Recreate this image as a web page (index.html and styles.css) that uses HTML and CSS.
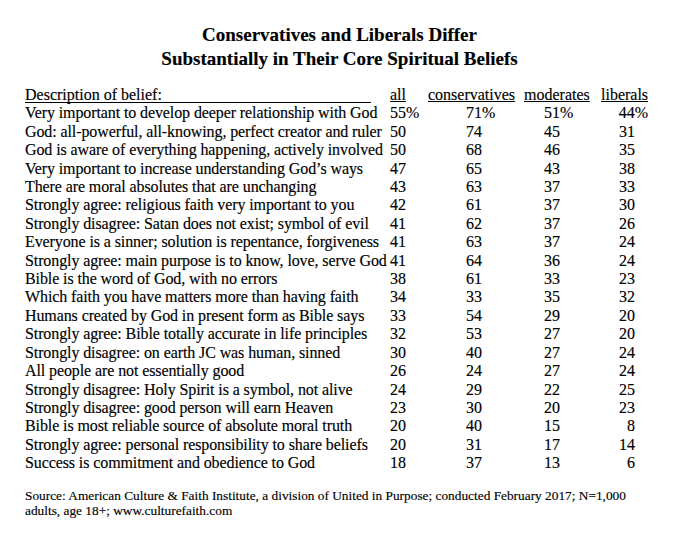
FILE: index.html
```html
<!DOCTYPE html>
<html lang="en">
<head>
<meta charset="utf-8">
<title>Conservatives and Liberals Differ</title>
<link rel="stylesheet" href="styles.css">
</head>
<body>
<main class="page">
  <h1 class="title">Conservatives and Liberals Differ<br>Substantially in Their Core Spiritual Beliefs</h1>
  <div class="table">
    <div class="row head">
      <span class="desc"><span class="desc-head">Description of belief:</span></span>
      <span class="c-all"><u>all</u></span>
      <span class="c-con"><u>conservatives</u></span>
      <span class="c-mod"><u>moderates</u></span>
      <span class="c-lib"><u>liberals</u></span>
    </div>
    <div class="row"><span class="desc">Very important to develop deeper relationship with God</span><span class="c-all">55%</span><span class="c-con">71%</span><span class="c-mod">51%</span><span class="c-lib">44<span class="pct">%</span></span></div>
    <div class="row"><span class="desc">God: all-powerful, all-knowing, perfect creator and ruler</span><span class="c-all">50</span><span class="c-con">74</span><span class="c-mod">45</span><span class="c-lib">31</span></div>
    <div class="row"><span class="desc">God is aware of everything happening, actively involved</span><span class="c-all">50</span><span class="c-con">68</span><span class="c-mod">46</span><span class="c-lib">35</span></div>
    <div class="row"><span class="desc">Very important to increase understanding God’s ways</span><span class="c-all">47</span><span class="c-con">65</span><span class="c-mod">43</span><span class="c-lib">38</span></div>
    <div class="row"><span class="desc">There are moral absolutes that are unchanging</span><span class="c-all">43</span><span class="c-con">63</span><span class="c-mod">37</span><span class="c-lib">33</span></div>
    <div class="row"><span class="desc">Strongly agree: religious faith very important to you</span><span class="c-all">42</span><span class="c-con">61</span><span class="c-mod">37</span><span class="c-lib">30</span></div>
    <div class="row"><span class="desc">Strongly disagree: Satan does not exist; symbol of evil</span><span class="c-all">41</span><span class="c-con">62</span><span class="c-mod">37</span><span class="c-lib">26</span></div>
    <div class="row"><span class="desc">Everyone is a sinner; solution is repentance, forgiveness</span><span class="c-all">41</span><span class="c-con">63</span><span class="c-mod">37</span><span class="c-lib">24</span></div>
    <div class="row"><span class="desc">Strongly agree: main purpose is to know, love, serve God</span><span class="c-all">41</span><span class="c-con">64</span><span class="c-mod">36</span><span class="c-lib">24</span></div>
    <div class="row"><span class="desc">Bible is the word of God, with no errors</span><span class="c-all">38</span><span class="c-con">61</span><span class="c-mod">33</span><span class="c-lib">23</span></div>
    <div class="row"><span class="desc">Which faith you have matters more than having faith</span><span class="c-all">34</span><span class="c-con">33</span><span class="c-mod">35</span><span class="c-lib">32</span></div>
    <div class="row"><span class="desc">Humans created by God in present form as Bible says</span><span class="c-all">33</span><span class="c-con">54</span><span class="c-mod">29</span><span class="c-lib">20</span></div>
    <div class="row"><span class="desc">Strongly agree: Bible totally accurate in life principles</span><span class="c-all">32</span><span class="c-con">53</span><span class="c-mod">27</span><span class="c-lib">20</span></div>
    <div class="row"><span class="desc">Strongly disagree: on earth JC was human, sinned</span><span class="c-all">30</span><span class="c-con">40</span><span class="c-mod">27</span><span class="c-lib">24</span></div>
    <div class="row"><span class="desc">All people are not essentially good</span><span class="c-all">26</span><span class="c-con">24</span><span class="c-mod">27</span><span class="c-lib">24</span></div>
    <div class="row"><span class="desc">Strongly disagree: Holy Spirit is a symbol, not alive</span><span class="c-all">24</span><span class="c-con">29</span><span class="c-mod">22</span><span class="c-lib">25</span></div>
    <div class="row"><span class="desc">Strongly disagree: good person will earn Heaven</span><span class="c-all">23</span><span class="c-con">30</span><span class="c-mod">20</span><span class="c-lib">23</span></div>
    <div class="row"><span class="desc">Bible is most reliable source of absolute moral truth</span><span class="c-all">20</span><span class="c-con">40</span><span class="c-mod">15</span><span class="c-lib">8</span></div>
    <div class="row"><span class="desc">Strongly agree: personal responsibility to share beliefs</span><span class="c-all">20</span><span class="c-con">31</span><span class="c-mod">17</span><span class="c-lib">14</span></div>
    <div class="row"><span class="desc">Success is commitment and obedience to God</span><span class="c-all">18</span><span class="c-con">37</span><span class="c-mod">13</span><span class="c-lib">6</span></div>
  </div>
  <p class="source">Source: American Culture &amp; Faith Institute, a division of United in Purpose; conducted February 2017; N=1,000 adults, age 18+; www.culturefaith.com</p>
</main>
</body>
</html>
```

FILE: styles.css
```css
html, body {
  margin: 0;
  padding: 0;
  background: #fff;
}

body {
  color: #000;
  font-family: "Liberation Serif", "Times New Roman", serif;
  -webkit-text-stroke: 0.15px #000;
}

.page {
  width: 679px;
  height: 535px;
  box-sizing: border-box;
  padding: 23px 0 0 25px;
  overflow: hidden;
}

.title {
  margin: 0 0 15px -25px;
  font-size: 19px;
  line-height: 24px;
  font-weight: bold;
  text-align: center;
}

.table {
  display: flex;
  flex-direction: column;
  font-size: 16px;
  line-height: 18.4px;
}

.row {
  display: grid;
  grid-template-columns: 365px 38px 96px 77px 46px;
  white-space: nowrap;
}

.desc {
  letter-spacing: -0.1px;
}

.desc-head {
  display: inline-block;
  width: 346px;
  letter-spacing: 0;
  background: linear-gradient(#000, #000) no-repeat 0 16px / 100% 1px;
}

.c-con {
  padding-left: 38px;
}

.c-mod {
  padding-left: 20px;
}

.c-lib {
  text-align: right;
  padding-right: 12px;
}

.row.head .c-con,
.row.head .c-mod,
.row.head .c-lib {
  padding-left: 0;
  padding-right: 0;
  text-align: left;
}

.pct {
  margin-right: -13px;
}

.source {
  margin: 15px 0 0;
  width: 632px;
  font-size: 13.33px;
  line-height: 15.4px;
}
```
